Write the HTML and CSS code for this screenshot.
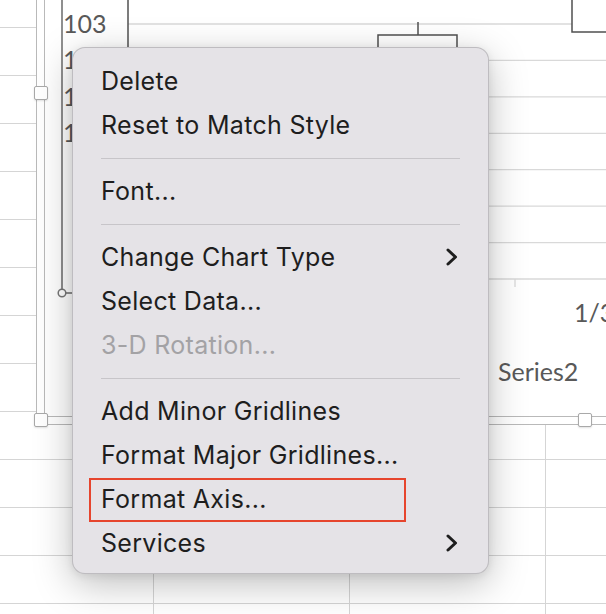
FILE: index.html
```html
<!DOCTYPE html>
<html lang="en">
<head>
<meta charset="utf-8">
<title>Chart context menu</title>
<link rel="stylesheet" href="styles.css">
</head>
<body>
<div class="sheet">
  <div class="chart">
    <div class="chart-inner"></div>
  </div>
  <svg class="plot" width="606" height="614" viewBox="0 0 606 614">
    <g class="grid">
      <line x1="128" y1="24" x2="572" y2="24"/>
      <line x1="300" y1="60.4" x2="606" y2="60.4"/>
      <line x1="300" y1="96.9" x2="606" y2="96.9"/>
      <line x1="300" y1="133.3" x2="606" y2="133.3"/>
      <line x1="300" y1="169.7" x2="606" y2="169.7"/>
      <line x1="300" y1="206.1" x2="606" y2="206.1"/>
      <line x1="300" y1="242.6" x2="606" y2="242.6"/>
      <line x1="300" y1="279" x2="606" y2="279"/>
      <line x1="515" y1="279" x2="515" y2="287"/>
    </g>
    <g class="boxes">
      <polyline points="128,0 128,60"/>
      <line x1="418" y1="22" x2="418" y2="35"/>
      <polyline points="378,70 378,35 457,35 457,70"/>
      <polyline points="572,0 572,32 610,32"/>
    </g>
    <g class="axis">
      <line x1="62" y1="0" x2="62" y2="289"/>
      <line x1="66" y1="293" x2="90" y2="293"/>
      <circle cx="62" cy="293" r="3.8"/>
    </g>
    <g class="labels">
      <text x="63" y="33">103</text>
      <text x="63" y="69.4">1</text>
      <text x="63" y="105.8">1</text>
      <text x="63" y="142.2">1</text>
      <text x="574" y="322">1/3</text>
      <text x="498" y="381">Series2</text>
    </g>
  </svg>
  <span class="handle h-left"></span>
  <span class="handle h-bl"></span>
  <span class="handle h-bm"></span>

  <div class="menu" role="menu">
    <div class="item">Delete</div>
    <div class="item">Reset to Match Style</div>
    <div class="sep"></div>
    <div class="item">Font...</div>
    <div class="sep"></div>
    <div class="item">Change Chart Type
      <svg class="chev" width="12" height="18" viewBox="0 0 12 18"><path d="M2 2 L9.5 9 L2 16"/></svg>
    </div>
    <div class="item">Select Data...</div>
    <div class="item disabled">3-D Rotation...</div>
    <div class="sep"></div>
    <div class="item">Add Minor Gridlines</div>
    <div class="item">Format Major Gridlines...</div>
    <div class="item">Format Axis...</div>
    <div class="item">Services
      <svg class="chev" width="12" height="18" viewBox="0 0 12 18"><path d="M2 2 L9.5 9 L2 16"/></svg>
    </div>
  </div>
  <div class="callout"></div>
</div>
</body>
</html>
```
FILE: styles.css
```css
html, body {
  margin: 0;
  padding: 0;
  background: #ffffff;
}

.sheet {
  position: relative;
  width: 606px;
  height: 614px;
  overflow: hidden;
  background-color: #ffffff;
  background-image:
    linear-gradient(to bottom, #d5d5d5 1px, transparent 1px),
    linear-gradient(to right, #d5d5d5 1px, transparent 1px);
  background-size: 100% 48px, 196px 100%;
  background-position: 0 27px, 153px 0;
}

.chart {
  position: absolute;
  left: 36px;
  top: -20px;
  width: 640px;
  height: 445px;
  box-sizing: border-box;
  border: 1px solid #b9b9b9;
  background: #ffffff;
}

.chart-inner {
  position: absolute;
  left: 7px;
  top: 0;
  right: 0;
  bottom: 7px;
  border-left: 1px solid #b9b9b9;
  border-bottom: 1px solid #b9b9b9;
}

.plot {
  position: absolute;
  left: 0;
  top: 0;
}

.grid line {
  stroke: #d9d9d9;
  stroke-width: 1.3;
}

.boxes line,
.boxes polyline {
  stroke: #505050;
  stroke-width: 1.5;
  fill: none;
}

.axis line {
  stroke: #6a6a6a;
  stroke-width: 1.5;
}

.axis circle {
  stroke: #777777;
  stroke-width: 1.5;
  fill: #ffffff;
}

.labels text {
  font-family: Lato, "Open Sans", sans-serif;
  font-size: 25px;
  fill: #595959;
}

.handle {
  position: absolute;
  width: 14px;
  height: 14px;
  box-sizing: border-box;
  background: #ffffff;
  border: 1px solid #a9a9a9;
  border-radius: 2px;
  box-shadow: 0 1px 2px rgba(0, 0, 0, 0.12);
}

.h-left { left: 34px; top: 86px; }
.h-bl { left: 34px; top: 413px; }
.h-bm { left: 578px; top: 413px; }

.menu {
  position: absolute;
  left: 72px;
  top: 47px;
  width: 417px;
  box-sizing: border-box;
  padding: 11px 0 8px;
  display: flex;
  flex-direction: column;
  background: #e5e3e7;
  border: 1px solid rgba(0, 0, 0, 0.17);
  border-radius: 13px;
  box-shadow: 0 10px 38px rgba(0, 0, 0, 0.26), 0 2px 8px rgba(0, 0, 0, 0.08);
  font-family: Inter, "Noto Sans", sans-serif;
  font-size: 25px;
  letter-spacing: 0.3px;
  color: #1e1e1e;
}

.item {
  height: 44px;
  display: flex;
  align-items: center;
  justify-content: space-between;
  padding: 0 30px 0 28px;
  white-space: nowrap;
}

.item.disabled {
  color: #a3a2a5;
}

.sep {
  height: 1px;
  margin: 10.5px 28px;
  background: #c7c5c9;
}

.chev path {
  fill: none;
  stroke: #1e1e1e;
  stroke-width: 3;
  stroke-linecap: round;
  stroke-linejoin: round;
}

.callout {
  position: absolute;
  left: 89px;
  top: 478px;
  width: 317px;
  height: 44px;
  box-sizing: border-box;
  border: 2.3px solid #e6452e;
}
```
